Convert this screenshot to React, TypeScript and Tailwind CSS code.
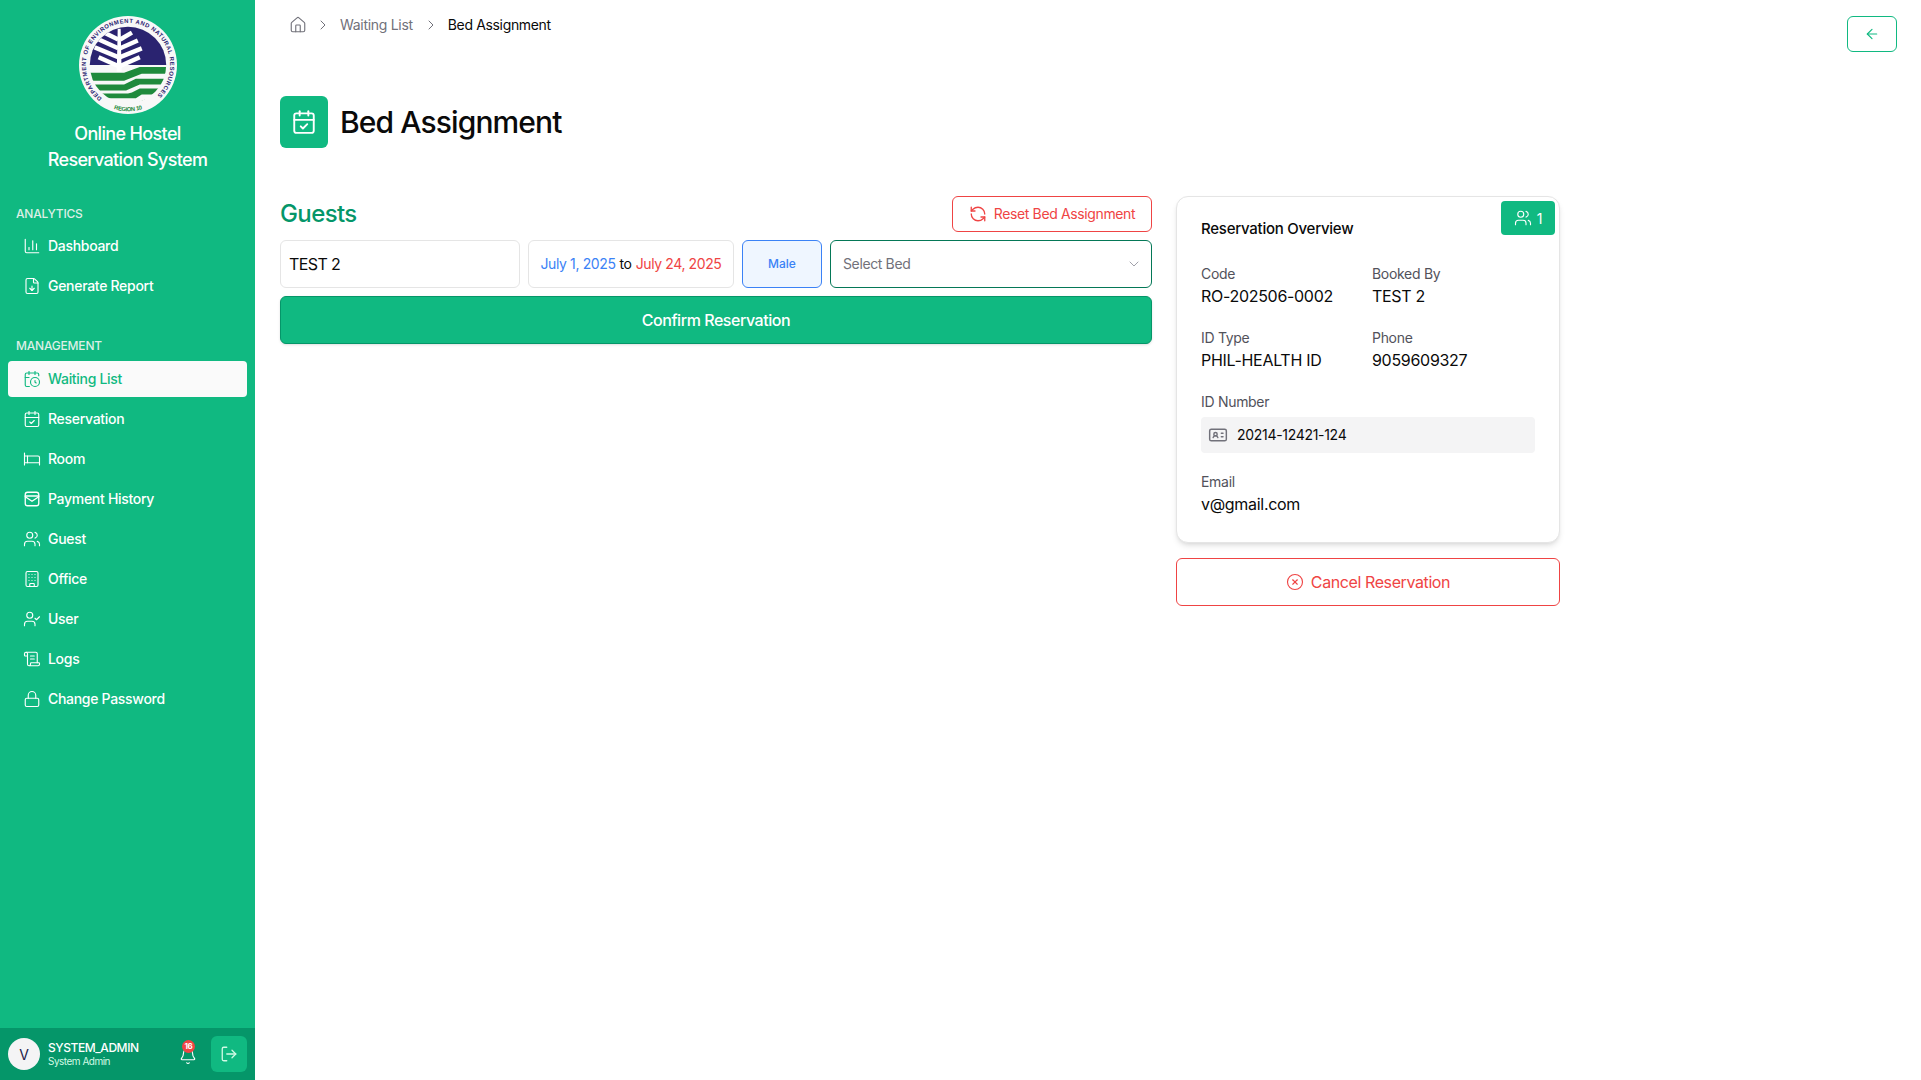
import React from "react";
import {
  ArrowLeft,
  Bed,
  Bell,
  Building,
  CalendarCheck,
  CalendarClock,
  ChartColumn,
  ChevronDown,
  ChevronRight,
  CircleX,
  FileDown,
  House,
  IdCard,
  Lock,
  LogOut,
  RefreshCcw,
  ScrollText,
  UserCheck,
  Users,
} from "lucide-react";

const ReceiptBox = ({ className }: { className?: string }) => (
  <svg viewBox="0 0 24 24" fill="none" stroke="currentColor" strokeWidth="1.75" strokeLinecap="round" strokeLinejoin="round" className={className}>
    <rect x="3" y="3" width="18" height="18" rx="3" />
    <path d="M3 8h18" />
    <path d="M3 9l9 6 9-6" />
  </svg>
);

const Logo = () => (
  <svg viewBox="0 0 100 100" className="w-[98px] h-[98px]">
    <circle cx="50" cy="50" r="50" fill="#f8f8f8" />
    <defs>
      <path id="ringTop" d="M 23.5 83.9 A 43 43 0 1 1 76.5 83.9" />
      <path id="ringBottom" d="M 22 88 A 47 47 0 0 0 78 88" />
      <clipPath id="inner">
        <circle cx="50" cy="50" r="39" />
      </clipPath>
    </defs>
    <text fontSize="6" fontWeight="700" fill="#2a2370" fontFamily="Liberation Sans, sans-serif" textLength="208">
      <textPath href="#ringTop">DEPARTMENT OF ENVIRONMENT AND NATURAL RESOURCES</textPath>
    </text>
    <text fontSize="6" fontWeight="700" fill="#1f8a3c" fontFamily="Liberation Sans, sans-serif" textAnchor="middle">
      <textPath href="#ringBottom" startOffset="50%">REGION 10</textPath>
    </text>
    <g clipPath="url(#inner)">
      <rect x="0" y="0" width="100" height="50" fill="#2a2370" />
      <path d="M39.5 13 L42.5 13 L43.5 57 L38.5 57 Z" fill="#fff" />
      <g stroke="#fff" strokeWidth="4.5" fill="none">
        <path d="M40 24 L26 17" />
        <path d="M42 24 L54 17" />
        <path d="M40 33 L18 23" />
        <path d="M42 33 L60 25" />
        <path d="M40 42 L16 32" />
        <path d="M42 42 L64 33" />
        <path d="M40 51 L20 42" />
        <path d="M42 51 L62 42" />
      </g>
      <path d="M10 58 H46 L62 52 H92 V59 H64 L46 66 H10 Z" fill="#1f8a3c" />
      <path d="M10 70 H46 L58 64 H92 V70 H62 L48 76 H12 Z" fill="#1f8a3c" />
      <path d="M54 78 L62 74 H92 V80 H64 L58 84 H16 V79 H50 Z" fill="#1f8a3c" />
      <path d="M56 90 L68 85 H88 L80 92 H54 Z" fill="#1f8a3c" />
    </g>
  </svg>
);

const NavItem = ({ icon: Icon, label, active }: { icon: React.ElementType; label: string; active?: boolean }) => (
  <div className={`flex items-center gap-[7px] h-9 rounded-[4px] pl-[15px] text-[14px] font-medium ${active ? "bg-[#fafafa] text-[#10b981]" : "text-white"}`}>
    <Icon className="w-[18px] h-[18px] shrink-0" strokeWidth={1.5} />
    <span className="pb-[2px]">{label}</span>
  </div>
);

const Field = ({ label, value }: { label: string; value: string }) => (
  <div>
    <div className="text-[14px] leading-5 text-[#52525b]">{label}</div>
    <div className="text-[16px] leading-6 text-[#0a0a0a]">{value}</div>
  </div>
);

export default function App() {
  return (
    <div className="flex h-screen bg-white text-[#0a0a0a] tracking-[-0.3px] font-['Inter',sans-serif]">
      <aside className="w-[255px] shrink-0 bg-[#10b981] flex flex-col">
        <div className="flex flex-col items-center pt-4">
          <Logo />
          <div className="mt-[7px] text-center text-[18px] leading-[26px] font-medium tracking-[-0.65px] text-white">
            Online Hostel
            <br />
            Reservation System
          </div>
        </div>

        <div className="flex-1 px-2">
          <div className="mt-[33px] pl-2 text-[12px] leading-4 font-medium tracking-[-0.2px] text-[#dcefe6]">ANALYTICS</div>
          <div className="mt-[6px] flex flex-col gap-1">
            <NavItem icon={ChartColumn} label="Dashboard" />
            <NavItem icon={FileDown} label="Generate Report" />
          </div>
          <div className="mt-[34px] pl-2 text-[12px] leading-4 font-medium tracking-[-0.2px] text-[#dcefe6]">MANAGEMENT</div>
          <div className="mt-[7px] flex flex-col gap-1">
            <NavItem icon={CalendarClock} label="Waiting List" active />
            <NavItem icon={CalendarCheck} label="Reservation" />
            <NavItem icon={Bed} label="Room" />
            <NavItem icon={ReceiptBox} label="Payment History" />
            <NavItem icon={Users} label="Guest" />
            <NavItem icon={Building} label="Office" />
            <NavItem icon={UserCheck} label="User" />
            <NavItem icon={ScrollText} label="Logs" />
            <NavItem icon={Lock} label="Change Password" />
          </div>
        </div>

        <div className="h-[52px] bg-[#059669] flex items-center px-2">
          <div className="w-8 h-8 rounded-full bg-[#f4f4f5] flex items-center justify-center text-[14px] text-[#1e1b4b]">V</div>
          <div className="ml-2 flex-1">
            <div className="text-[12px] leading-[15px] font-medium tracking-[-0.45px] text-white">SYSTEM_ADMIN</div>
            <div className="text-[10px] leading-[13px] tracking-[-0.5px] text-[#d1fae5]">System Admin</div>
          </div>
          <div className="relative mr-[14px] mt-[4px] text-white">
            <Bell className="w-[18px] h-[18px]" strokeWidth={1.5} />
            <span className="absolute -top-[7px] left-[3px] w-[13px] h-[13px] rounded-full bg-[#ef4444] text-white text-[8px] leading-[13px] text-center font-bold">16</span>
          </div>
          <div className="w-9 h-9 rounded-[6px] bg-[#10b981] flex items-center justify-center text-[#d1fae5]">
            <LogOut className="w-[18px] h-[18px]" strokeWidth={1.75} />
          </div>
        </div>
      </aside>

      <main className="flex-1 pl-[25px] pr-[24px]">
        <div className="flex justify-between pt-4">
          <div className="flex items-center h-[18px] text-[14px]">
            <House className="w-[18px] h-[18px] ml-[9px] text-[#71717a]" strokeWidth={1.5} />
            <ChevronRight className="w-4 h-4 ml-[8px] text-[#71717a]" strokeWidth={1.5} />
            <span className="ml-[9px] pb-[2px] text-[#71717a]">Waiting List</span>
            <ChevronRight className="w-4 h-4 ml-[10px] text-[#71717a]" strokeWidth={1.5} />
            <span className="ml-[9px] pb-[2px] tracking-[-0.35px]">Bed Assignment</span>
          </div>
          <div className="w-[50px] h-9 rounded-[6px] border border-[#10b981] flex items-center justify-center text-[#10b981]">
            <ArrowLeft className="w-4 h-4" strokeWidth={1.75} />
          </div>
        </div>

        <div className="mt-[44px] flex items-center gap-[12px]">
          <div className="w-12 h-[52px] rounded-[6px] bg-[#10b981] flex items-center justify-center text-white">
            <CalendarCheck className="w-[26px] h-[26px]" strokeWidth={1.75} />
          </div>
          <h1 className="text-[30px] leading-9 font-medium tracking-[-0.9px]">Bed Assignment</h1>
        </div>

        <div className="mt-[48px] flex gap-6 items-start">
          <div className="w-[872px]">
            <div className="flex items-center justify-between h-9">
              <h2 className="text-[24px] leading-8 font-medium tracking-[-0.6px] text-[#059669]">Guests</h2>
              <button className="h-9 w-[200px] rounded-[6px] border border-[#ef4444] flex items-center justify-center gap-[7px] pb-[1px] text-[14px] tracking-[-0.37px] text-[#ef4444]">
                <RefreshCcw className="w-[18px] h-[18px]" strokeWidth={1.75} />
                Reset Bed Assignment
              </button>
            </div>
            <div className="mt-2 flex gap-2 h-12">
              <div className="w-[240px] rounded-[6px] border border-[#e5e5e5] flex items-center pl-2 pb-[1px] text-[16px] tracking-[-0.6px]">TEST 2</div>
              <div className="w-[206px] rounded-[6px] border border-[#e5e5e5] flex items-center justify-center gap-1 pb-[1px] text-[14px] tracking-[-0.38px]">
                <span className="text-[#3b82f6]">July 1, 2025</span>
                <span>to</span>
                <span className="text-[#ef4444]">July 24, 2025</span>
              </div>
              <div className="w-[80px] rounded-[6px] border border-[#3b82f6] bg-[#eff6ff] flex items-center justify-center text-[12px] font-medium tracking-normal text-[#3b82f6]">Male</div>
              <div className="flex-1 rounded-[6px] border border-[#047857] flex items-center justify-between pl-[12px] pr-[9px] pb-[1px] text-[14px] tracking-[-0.37px] text-[#71717a]">
                Select Bed
                <ChevronDown className="w-4 h-4 text-[#a1a1aa]" strokeWidth={1.5} />
              </div>
            </div>
            <button className="mt-2 w-full h-12 rounded-[6px] bg-[#10b981] border border-[#059669] shadow-sm pb-[1px] text-[16px] font-medium tracking-[-0.45px] text-white">
              Confirm Reservation
            </button>
          </div>

          <div className="w-[384px]">
            <div className="relative h-[347px] rounded-[12px] border border-[#e5e5e5] shadow-md bg-white pt-[22px] px-6">
              <div className="absolute top-[4px] right-[4px] w-[54px] h-[34px] rounded-[4px] bg-[#10b981] text-white flex items-center justify-center gap-[5px] text-[14px]">
                <Users className="w-[18px] h-[18px]" strokeWidth={1.5} />1
              </div>
              <div className="text-[15px] leading-5 font-medium tracking-[-0.25px]">Reservation Overview</div>
              <div className="mt-[25px] grid grid-cols-2 gap-x-2 gap-y-5">
                <Field label="Code" value="RO-202506-0002" />
                <Field label="Booked By" value="TEST 2" />
                <Field label="ID Type" value="PHIL-HEALTH ID" />
                <Field label="Phone" value="9059609327" />
              </div>
              <div className="mt-5 text-[14px] leading-5 text-[#52525b]">ID Number</div>
              <div className="mt-[5px] h-9 rounded-[4px] bg-[#f4f4f5] flex items-center pl-[7px] gap-[9px] pb-[1px] text-[14px]">
                <IdCard className="w-5 h-5 text-[#71717a]" strokeWidth={1.75} />
                20214-12421-124
              </div>
              <div className="mt-[19px]">
                <Field label="Email" value="v@gmail.com" />
              </div>
            </div>
            <button className="mt-[15px] w-full h-12 rounded-[6px] border border-[#ef4444] flex items-center justify-center gap-[7px] pb-[1px] text-[16px] tracking-[-0.4px] text-[#ef4444]">
              <CircleX className="w-[18px] h-[18px]" strokeWidth={1.5} />
              Cancel Reservation
            </button>
          </div>
        </div>
      </main>
    </div>
  );
}
